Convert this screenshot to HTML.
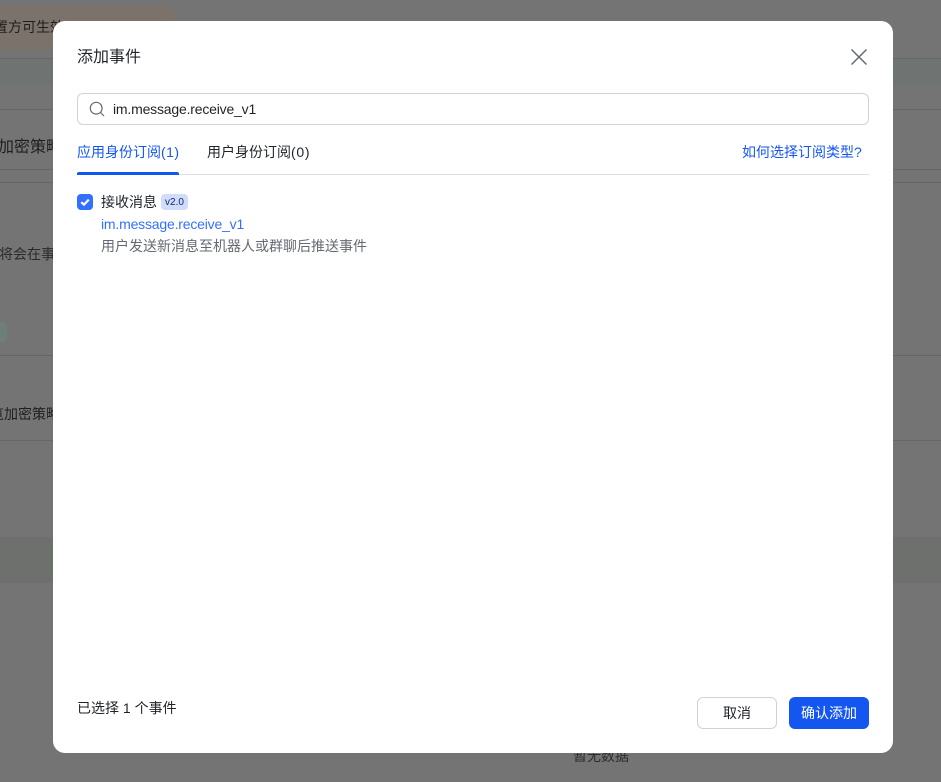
<!DOCTYPE html>
<html lang="zh-CN">
<head>
<meta charset="utf-8">
<title>添加事件</title>
<style>
*{box-sizing:border-box;margin:0;padding:0}
html,body{width:941px;height:782px;overflow:hidden;background:#747474}
body{position:relative;font-family:"Liberation Sans","Noto Sans CJK SC",sans-serif;font-size:14px;color:#1f2329}
.a{position:absolute;white-space:nowrap}
.l{position:absolute;left:0;width:941px;height:1px;background:#666766}
.bg{color:#1f1f1f;line-height:20px}
.modal{position:absolute;left:53px;top:21px;width:840px;height:732px;background:#fff;border-radius:12px}
.n{letter-spacing:.45px}
</style>
</head>
<body>
<div class="a" style="left:-10px;top:5px;width:185px;height:45px;background:#7b736b;border-radius:8px"></div>
<div class="a bg" style="left:-6px;top:17px;font-size:14px">置方可生效</div>
<div class="a" style="left:0;top:59px;width:941px;height:26px;background:#6f7473"></div>
<div class="l" style="top:58px"></div>
<div class="l" style="top:109px"></div>
<div class="l" style="top:169px"></div>
<div class="l" style="top:182px"></div>
<div class="a bg" style="left:-2px;top:137px;font-size:16px;line-height:22px">加密策略</div>
<div class="a bg" style="left:-1px;top:244px;color:#2b2b2b">将会在事</div>
<div class="a" style="left:-10px;top:322px;width:17px;height:20px;background:#6c7f78;border-radius:4px"></div>
<div class="l" style="top:355px"></div>
<div class="a bg" style="left:-10px;top:404px">览加密策略</div>
<div class="l" style="top:440px"></div>
<div class="a" style="left:0;top:537px;width:941px;height:46px;background:#6e706e"></div>
<div class="a bg" style="left:573px;top:746px;color:#2d2d2d">暂无数据</div>

<div class="modal"></div>
<div class="a" style="left:77px;top:47px;font-size:16px;line-height:22px;color:#1f2329">添加事件</div>
<svg class="a" style="left:850px;top:48px" width="18" height="18" viewBox="0 0 18 18"><path d="M1.5 1.5L16.5 16.5M16.5 1.5L1.5 16.5" stroke="#646a73" stroke-width="1.5" fill="none"/></svg>

<div class="a" style="left:77px;top:93px;width:792px;height:32px;border:1px solid #d0d3d6;border-radius:6px"></div>
<svg class="a" style="left:89px;top:101px" width="16" height="16" viewBox="0 0 16 16"><circle cx="7.2" cy="7.2" r="5.9" stroke="#646a73" stroke-width="1.2" fill="none"/><path d="M11.5 11.5L15 15" stroke="#646a73" stroke-width="1.2" fill="none"/></svg>
<div class="a" style="left:113px;top:99px;line-height:20px;color:#1f2329;letter-spacing:-.19px">im.message.receive_v1</div>

<div class="a" style="left:77px;top:142px;line-height:20px;color:#1456f0">应用身份订阅<span class="n">(1)</span></div>
<div class="a" style="left:207px;top:142px;line-height:20px;color:#1f2329">用户身份订阅<span class="n" style="letter-spacing:.7px">(0)</span></div>
<div class="a" style="left:742px;top:142px;line-height:20px;color:#1456f0">如何选择订阅类型?</div>
<div class="a" style="left:77px;top:174px;width:792px;height:1px;background:#dee0e3"></div>
<div class="a" style="left:77px;top:172px;width:102px;height:3px;background:#1456f0;border-radius:2px 2px 0 0"></div>

<div class="a" style="left:77px;top:194px;width:16px;height:16px;background:#3370ff;border-radius:4px"></div>
<svg class="a" style="left:77px;top:194px" width="16" height="16" viewBox="0 0 16 16"><path d="M4.2 8.2L7 10.6L11.8 5.6" stroke="#fff" stroke-width="2.2" fill="none"/></svg>
<div class="a" style="left:101px;top:192px;font-size:14px;line-height:20px;color:#1f2329">接收消息</div>
<div class="a" style="left:161px;top:194px;width:27px;height:16px;padding-top:1px;background:#d1dcfa;border-radius:4px;font-size:10px;line-height:16px;text-align:center;color:#0c296e">v2.0</div>
<div class="a" style="left:101px;top:214px;line-height:20px;color:#3370ff;letter-spacing:-.19px">im.message.receive_v1</div>
<div class="a" style="left:101px;top:236px;font-size:14px;line-height:20px;color:#646a73">用户发送新消息至机器人或群聊后推送事件</div>

<div class="a" style="left:77px;top:698px;font-size:14px;line-height:20px;color:#1f2329">已选择 1 个事件</div>
<div class="a" style="left:697px;top:697px;width:80px;height:32px;border:1px solid #d0d3d6;border-radius:6px;background:#fff;text-align:center;line-height:30px;color:#1f2329">取消</div>
<div class="a" style="left:789px;top:697px;width:80px;height:32px;border-radius:6px;background:#1456f0;text-align:center;line-height:32px;color:#fff">确认添加</div>
</body>
</html>
